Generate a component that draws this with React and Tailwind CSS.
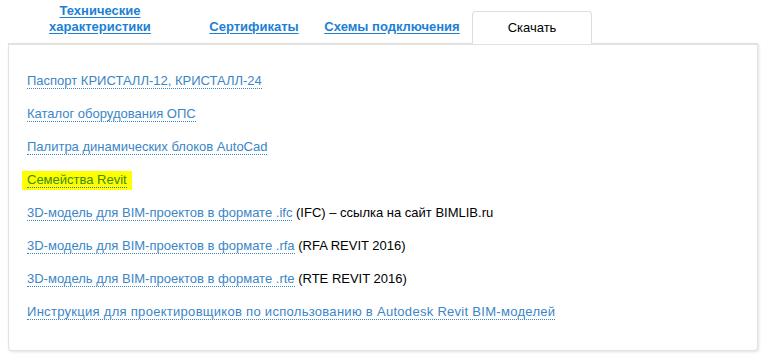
import React from 'react';

const tabs = [
  { label: ['Технические', 'характеристики'], width: 'w-[184px]' },
  { label: ['Сертификаты'], width: 'w-[124px]' },
  { label: ['Схемы подключения'], width: 'w-[152px]' },
];

const files = [
  { link: 'Паспорт КРИСТАЛЛ-12, КРИСТАЛЛ-24' },
  { link: 'Каталог оборудования ОПС' },
  { link: 'Палитра динамических блоков AutoCad' },
  { link: 'Семейства Revit', highlight: true },
  { link: '3D-модель для BIM-проектов в формате .ifc', note: '(IFC) – ссылка на сайт BIMLIB.ru' },
  { link: '3D-модель для BIM-проектов в формате .rfa', note: '(RFA REVIT 2016)' },
  { link: '3D-модель для BIM-проектов в формате .rte', note: '(RTE REVIT 2016)' },
  { link: 'Инструкция для проектировщиков по использованию в Autodesk Revit BIM-моделей', wide: true },
];

const App = () => {
  return (
    <div className="w-[766px] h-[360px] bg-white text-[13px] font-['Liberation_Sans',Arial,sans-serif]">
      {/* Tabs */}
      <div className="flex items-end h-[43px] pl-[8px]">
        {tabs.map((tab) => (
          <div key={tab.label[0]} className={`${tab.width} pb-[8px] text-center`}>
            <a href="#" className="font-bold leading-[16px] text-[#1c7fd6] underline underline-offset-[2px]">
              {tab.label.map((line, i) => (
                <span key={i} className="block">{line}</span>
              ))}
            </a>
          </div>
        ))}
        <div className="relative z-10 ml-[4px] -mb-[1px] w-[120px] h-[33px] pt-[8px] bg-white border border-b-0 border-[#dedede] rounded-t-[4px] text-center leading-[16px] text-black">
          Скачать
        </div>
      </div>

      {/* Panel */}
      <div className="mx-[8px] w-[750px] h-[308px] bg-white border border-[#e2e2e2] border-t-2 rounded-b-[4px] shadow-[1px_1px_3px_rgba(0,0,0,0.12)] pl-[18px] pt-[28px]">
        <div className="flex flex-col gap-[17px]">
          {files.map((f) => (
            <div key={f.link} className="leading-[16px] h-[16px]">
              {f.highlight ? (
                <span className="inline-block -ml-[5px] -mt-[2px] h-[19px] px-[5px] pt-[1px] bg-[#ffff00]">
                  <a href="#" className="text-[#3a8a14] border-b border-dotted border-[#2f6fd0]">
                    {f.link}
                  </a>
                </span>
              ) : (
                <a
                  href="#"
                  className={`text-[#3b86c6] border-b border-dotted border-[#3b86c6] ${f.wide ? 'tracking-[0.29px]' : ''}`}
                >
                  {f.link}
                </a>
              )}
              {f.note && <span className="text-black"> {f.note}</span>}
            </div>
          ))}
        </div>
      </div>
    </div>
  );
};

export default App;
